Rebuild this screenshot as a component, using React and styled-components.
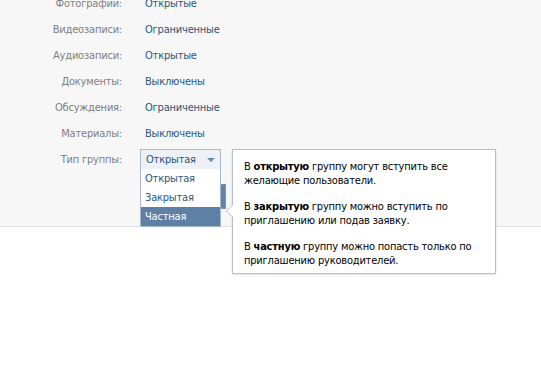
import React from 'react';
import styled, { createGlobalStyle } from 'styled-components';

const GlobalStyle = createGlobalStyle`
  html, body {
    margin: 0;
    background: #fff;
  }
  body {
    font-family: 'DejaVu Sans Condensed', 'DejaVu Sans', Tahoma, sans-serif;
    font-size: 11px;
    letter-spacing: -0.2px;
  }
`;

const Page = styled.div`
  min-height: 372px;
`;

const Panel = styled.div`
  display: flow-root;
  background: #f7f7f7;
  height: 226px;
  border-bottom: 1px solid #dfe3e8;
`;

const Form = styled.div`
  display: grid;
  grid-template-columns: 122px 1fr;
  grid-auto-rows: 26px;
  column-gap: 18px;
  align-items: center;
  margin-top: -10px;
`;

const Label = styled.div`
  text-align: right;
  color: #808080;
  white-space: nowrap;
`;

const Value = styled.div`
  padding-left: 5px;
  color: #2b587a;
  white-space: nowrap;
`;

const SelectWrap = styled.div`
  position: relative;
  width: 81px;
  height: 20px;
  z-index: 2;
`;

const SelectHead = styled.div`
  box-sizing: border-box;
  height: 20px;
  padding: 0 0 0 5px;
  display: flex;
  align-items: center;
  justify-content: space-between;
  background: #edf1f5;
  border: 1px solid #a9b8c8;
  border-bottom: none;
  color: #2b587a;
`;

const Arrow = styled.span`
  width: 0;
  height: 0;
  margin-right: 5px;
  border-left: 4px solid transparent;
  border-right: 4px solid transparent;
  border-top: 4px solid #6b88a8;
`;

const OptionList = styled.div`
  position: absolute;
  top: 20px;
  left: 0;
  width: 81px;
  box-sizing: border-box;
  background: #fff;
  border: 1px solid #a9b8c8;
  border-top: none;
`;

const Option = styled.div`
  height: 19px;
  line-height: 19px;
  padding-left: 4px;
  color: ${p => (p.$active ? '#fff' : '#2b587a')};
  background: ${p => (p.$active ? '#5f80a6' : 'transparent')};
`;

const Tooltip = styled.div`
  position: absolute;
  left: 92px;
  top: 0;
  width: 264px;
  box-sizing: border-box;
  padding: 10px 10px 5px 11px;
  background: #fff;
  border: 1px solid #b2bfcd;
  box-shadow: 0 1px 2px rgba(0, 0, 0, 0.12);
  color: #000;
  line-height: 14px;

  &::before,
  &::after {
    content: '';
    position: absolute;
    top: 55px;
    width: 0;
    height: 0;
    border-top: 6px solid transparent;
    border-bottom: 6px solid transparent;
  }
  &::before {
    left: -7px;
    border-right: 6px solid #b2bfcd;
  }
  &::after {
    left: -6px;
    border-right: 6px solid #fff;
  }
`;

const Para = styled.p`
  margin: 0 0 12px;
  &:last-child {
    margin-bottom: 0;
  }
`;

const SaveButton = styled.button`
  width: 86px;
  height: 25px;
  margin-top: 12px;
  align-self: start;
  padding: 0;
  background: #6383a8;
  border: 1px solid #7795b8;
  color: #fff;
  font: inherit;
`;

const rows = [
  ['Фотографии:', 'Открытые'],
  ['Видеозаписи:', 'Ограниченные'],
  ['Аудиозаписи:', 'Открытые'],
  ['Документы:', 'Выключены'],
  ['Обсуждения:', 'Ограниченные'],
  ['Материалы:', 'Выключены'],
];

const options = ['Открытая', 'Закрытая', 'Частная'];

export default function App() {
  return (
    <Page>
      <GlobalStyle />
      <Panel>
        <Form>
          {rows.map(([label, value]) => (
            <React.Fragment key={label}>
              <Label>{label}</Label>
              <Value>{value}</Value>
            </React.Fragment>
          ))}
          <Label>Тип группы:</Label>
          <SelectWrap>
            <SelectHead>
              Открытая
              <Arrow />
            </SelectHead>
            <OptionList>
              {options.map(o => (
                <Option key={o} $active={o === 'Частная'}>{o}</Option>
              ))}
            </OptionList>
            <Tooltip>
              <Para>
                В <b>открытую</b> группу могут вступить все желающие пользователи.
              </Para>
              <Para>
                В <b>закрытую</b> группу можно вступить по приглашению или подав заявку.
              </Para>
              <Para>
                В <b>частную</b> группу можно попасть только по приглашению руководителей.
              </Para>
            </Tooltip>
          </SelectWrap>
          <span />
          <SaveButton>Сохранить</SaveButton>
        </Form>
      </Panel>
    </Page>
  );
}
